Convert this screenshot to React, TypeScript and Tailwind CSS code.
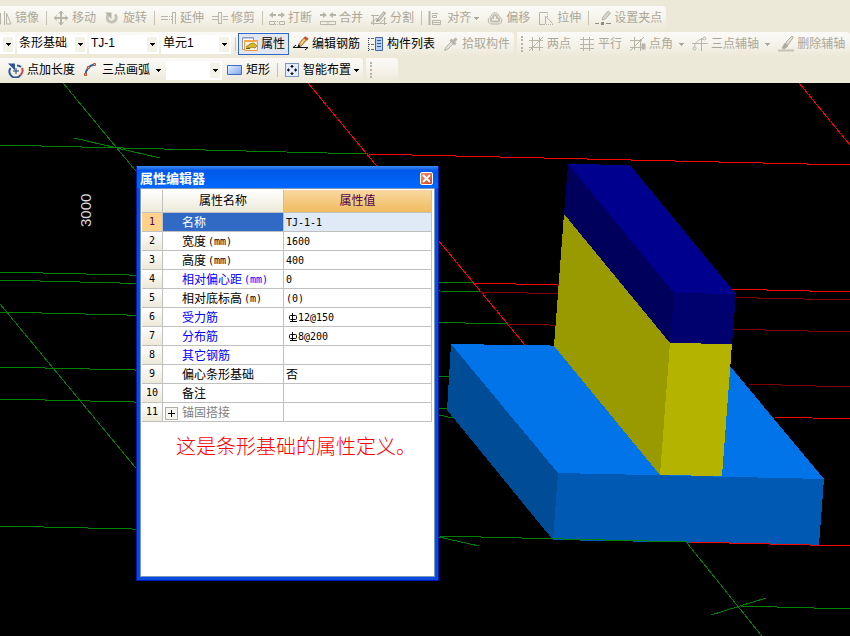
import type { ReactNode } from "react";

type Segment = [number, number, number, number, string];

const GREEN = "#008000";
const RED = "#ff0000";
const MAROON = "#800000";

const axes: Segment[] = [
  [63, 83, 140, 176, GREEN],
  [74, 138, 160, 158, GREEN],
  [0, 145, 368, 154, GREEN],
  [368, 154, 850, 165, RED],
  [308, 83, 525, 345, RED],
  [799, 83, 850, 145, RED],
  [0, 272, 474, 283, GREEN],
  [474, 283, 850, 292, RED],
  [0, 280, 480, 292, GREEN],
  [480, 292, 850, 300, MAROON],
  [0, 312, 507, 324, GREEN],
  [507, 324, 850, 332, MAROON],
  [0, 367, 451, 377, GREEN],
  [748, 384, 850, 387, MAROON],
  [0, 399, 447, 409, GREEN],
  [774, 417, 850, 419, RED],
  [0, 304, 140, 473, GREEN],
  [0, 526, 439, 536, GREEN],
  [430, 413, 453, 418, GREEN],
  [439, 537, 479, 546, GREEN],
  [687, 543, 765, 640, GREEN],
  [711, 615, 766, 598, GREEN],
  [740, 606, 850, 609, GREEN],
];

const faces = [
  { points: "451,344 715,348 824,479 558,473", fill: "#0074e8" },
  { points: "451,344 558,473 553,540 447,410", fill: "#004c96" },
  { points: "558,473 824,479 819,545 553,540", fill: "#005ab3" },
  { points: "564,214 670,343 660,475 554,346", fill: "#999900" },
  { points: "670,343 732,344 722,476 660,475", fill: "#b3b300" },
  { points: "568,164 630,165 736,294 674,293", fill: "#00008f" },
  { points: "568,164 674,293 670,343 564,214", fill: "#00005c" },
  { points: "674,293 736,294 732,344 670,343", fill: "#00006f" },
];

const rows = [
  { name: "名称", value: "TJ-1-1" },
  { name: "宽度", unit: "(mm)", value: "1600" },
  { name: "高度", unit: "(mm)", value: "400" },
  { name: "相对偏心距", unit: "(mm)", value: "0", tone: "text-[#0000ff]" },
  { name: "相对底标高", unit: "(m)", value: "(0)" },
  { name: "受力筋", value: "12@150", rebar: true, tone: "text-[#0000ff]" },
  { name: "分布筋", value: "8@200", rebar: true, tone: "text-[#0000ff]" },
  { name: "其它钢筋", value: "", tone: "text-[#0000ff]" },
  { name: "偏心条形基础", value: "否" },
  { name: "备注", value: "" },
  { name: "锚固搭接", value: "", tone: "text-[#808080]", expandable: true },
];

function Icon({ children }: { children: ReactNode }) {
  return (
    <svg viewBox="0 0 16 16" className="size-4 shrink-0" fill="none" stroke="#b7b4a8" aria-hidden="true">
      {children}
    </svg>
  );
}

const icons = {
  mirror: (
    <Icon>
      <path d="M4.500 3v11H0zM8.500 1v14M10.500 3v11H15z" />
    </Icon>
  ),
  move: (
    <Icon>
      <path d="M8 2v12M2 8h12" strokeWidth="2" />
      <path d="M5.500 4 8 1l2.500 3M5.500 12 8 15l2.500-3M4 5.500 1 8l3 2.500M12 5.500 15 8l-3 2.500" />
    </Icon>
  ),
  rotate: (
    <Icon>
      <path d="M11 4.500A4.500 4.500 0 1 1 4 5" stroke="#c4c1b5" strokeWidth="3" />
      <path d="M1 2.500h6.500V9z" fill="#b5b2a6" stroke="none" />
    </Icon>
  ),
  extend: (
    <Icon>
      <path d="M0 6.500h6M0 9.500h6" />
      <path d="M6 6.500h5M6 9.500h5" strokeDasharray="1 1" />
      <path d="M11.500 2v12M14.500 2v12M11 2.500h4" />
    </Icon>
  ),
  trim: (
    <Icon>
      <path d="M0 6.500h6M0 9.500h6M11 6.500h5M11 9.500h5" />
      <path d="M6.500 2v12M9.500 2v12M6 2.500h4M6 13.500h4" />
    </Icon>
  ),
  breakAt: (
    <Icon>
      <path d="M2 5h5M14 5H9" strokeWidth="2" />
      <path d="M0 5l4-3v6zM16 5l-4-3v6z" fill="#b7b4a8" stroke="none" />
      <path d="M.5 11.500h5v3h-5zM10.500 11.500h5v3h-5z" />
      <path d="M6 11.500h4M6 14.500h4" strokeDasharray="1 1" />
    </Icon>
  ),
  merge: (
    <Icon>
      <path d="M0 5h4M16 5h-4" strokeWidth="2" />
      <path d="M7 5 3 2v6zM9 5l4-3v6z" fill="#b7b4a8" stroke="none" />
      <path d="M.5 11.500h15v3H.5zM8 11v4" />
    </Icon>
  ),
  split: (
    <Icon>
      <path d="M0 5.500h8M0 13.500h16M2.500 5v10M13.500 7v8M0 13l6-5M9 13l6-5" />
      <path d="M7 10.500 14 2" strokeWidth="3.500" />
      <path d="M8 9l5-6" stroke="#e6e3d9" />
      <path d="m5 12 1-3 2 2z" fill="#8f8c80" stroke="none" />
    </Icon>
  ),
  align: (
    <Icon>
      <path d="M1.500 1v14" strokeWidth="2" />
      <path d="M4 3.500h6M4.500 7.500h4v-2h-4zM4.500 10.500h8v4h-8zM4 12.500h8" />
    </Icon>
  ),
  offset: (
    <Icon>
      <path d="M4 6.500C5 1.500 11 1.500 12 6.500 16 8.500 15.500 14 11 14H5C.5 14 0 8.500 4 6.500z" />
      <path d="M6 8c0-4 4-4 4 0 3 .5 3 3.500 0 3.500H6C3 11.500 3 8.500 6 8z" strokeWidth="2" stroke="#c0bdb1" />
    </Icon>
  ),
  stretch: (
    <Icon>
      <path d="M9 2.500H1.500v12H7" />
      <path d="M9.500 2v6M4 14.500h11M5 2.500h4" strokeDasharray="1 1" />
      <path d="M7.500 6l7 7.500M7.500 6v8" />
    </Icon>
  ),
  grip: (
    <Icon>
      <path d="M0 13.500h4M11 13.500h5" stroke="#8f8c80" />
      <path d="M6 12h3v3H6z" fill="#8f8c80" stroke="none" />
      <path d="M7 10l1-3 5-6 2.500 2-5 6z" fill="#d6d3c9" />
    </Icon>
  ),
  props: (
    <Icon>
      <path d="M.5 1.500h11v12H.5z" fill="#fff" stroke="#8c98b4" />
      <path d="M1 2.500h10" stroke="#c0cfe8" />
      <path d="M2.500 4.500h13v10h-13z" fill="#fff3dc" stroke="#f2973c" />
      <path d="M2 5h14" stroke="#f5a54c" strokeWidth="2" />
      <path d="m4 11 4-3 3-1 2 1 2 2-2 2-3-1-2 1-3-1z" fill="#dcb92c" stroke="#a08a2c" />
      <path d="M4 12.500h4" stroke="#6b5a1c" />
    </Icon>
  ),
  editBar: (
    <Icon>
      <path d="M0 11.500h15M0 11.500 3 9M15 11.500 12 14" stroke="#111" />
      <path d="M7 9 13 2" stroke="#a8703a" strokeWidth="4" />
      <path d="M7.500 8.500 12 3" stroke="#f5cf72" strokeWidth="2" />
      <path d="m12.500 3.500 1.500-2" stroke="#d64a36" strokeWidth="4" />
      <path d="m4 12 1.500-4L8 10.500z" fill="#222" stroke="none" />
    </Icon>
  ),
  list: (
    <Icon>
      <path d="M.5 2v13" stroke="#345" strokeDasharray="1 1" />
      <path d="M1 2.500h5M1 8.500h5M1 13.500h5" stroke="#5b6f94" strokeDasharray="1 1 3" />
      <path d="M7.500 1.500h7v13h-7z" fill="#b9d2fa" stroke="#3d66ae" />
      <path d="M9 4.500h4M9 7.500h4M9 10.500h4" stroke="#2a559f" />
    </Icon>
  ),
  pick: (
    <Icon>
      <path d="M1.500 14.500 3 11l6-6 2 2-6 6z" fill="#e3e0d6" />
      <path d="M7.500 3.500l5 5M10 6l3.500-3.500" strokeWidth="3" />
    </Icon>
  ),
  twoPoint: (
    <Icon>
      <path d="M4.500 1v14M11.500 1v14M1 4.500h14M1 11.500h14M1 15 15 1" />
    </Icon>
  ),
  parallel: (
    <Icon>
      <path d="M4.500 1v14M10.500 1v14M1 3.500h14M1 8.500h14M1 12.500h14" />
    </Icon>
  ),
  pointAngle: (
    <Icon>
      <path d="M4.500 1v13M10.500 3v12M0 4.500h12M0 11.500h12M0 15 14 1" />
      <path d="M12.500 8.500h2v4h-2z" strokeWidth="2" />
    </Icon>
  ),
  arcAxis: (
    <Icon>
      <path d="M2.500 12C2 7 7 2.500 12 3M0 7.500h16M9.500 2v13" />
      <circle cx="2.500" cy="12.500" r="1.500" fill="#eee" />
      <circle cx="12.500" cy="2.500" r="1.500" fill="#eee" />
    </Icon>
  ),
  eraseAxis: (
    <Icon>
      <path d="M0 14.500h16" strokeWidth="2" stroke="#c4c1b5" />
      <path d="M4 12l3-5 3 3-4 3z" fill="#aca899" />
      <path d="m8 6 6-6 1.500 1L10 9z" fill="#dedbd0" />
    </Icon>
  ),
  pointLength: (
    <Icon>
      <path d="M2.500 6a6 6 0 0 0 10 7" stroke="#2b5797" strokeWidth="2" />
      <path d="M9 3.500A6 6 0 0 1 13 5" stroke="#2b5797" strokeWidth="2" />
      <path d="M0 1.500h7v7z" fill="#2b5797" stroke="none" />
      <path d="M8 6v6M5 9h6" stroke="#1e3b6c" />
      <path d="M14 6c1 2 .5 5-1.500 7" stroke="#c04a4a" strokeWidth="2" />
    </Icon>
  ),
  arc: (
    <Icon>
      <path d="M2.500 13C2.500 8 6 3 12 2.500" stroke="#2c5f9e" strokeWidth="2" />
      <path d="M1.500 11.500h2v2h-2zM4.500 4.500h2v2h-2zM10.500 1.500h2v2h-2z" fill="#f3b5a5" stroke="#cf4a32" />
    </Icon>
  ),
  rect: (
    <Icon>
      <defs>
        <linearGradient id="rectFill" x1="0" y1="0" x2="1" y2="1">
          <stop offset="0" stopColor="#e8f1ff" />
          <stop offset="1" stopColor="#7ba4ec" />
        </linearGradient>
      </defs>
      <path d="M.5 3.500h14v9H.5z" fill="url(#rectFill)" stroke="#3f6cc8" />
    </Icon>
  ),
  smart: (
    <Icon>
      <path d="M1 1h14v14H1z" fill="#e2edff" stroke="none" />
      <path d="M1.500 1.500h13v13h-13z" stroke="#1d3f7c" strokeDasharray="1 1" />
      <path d="M8 3v3M8 10v3M3 8h3M10 8h3" stroke="#111" />
      <path d="M6 5h4L8 3zM6 11h4l-2 2zM5 6v4L3 8zM11 6v4l2-2z" fill="#111" stroke="none" />
    </Icon>
  ),
};

function Arrow({ muted = false }: { muted?: boolean }) {
  return (
    <svg viewBox="0 0 5 3" width="5" height="3" shapeRendering="crispEdges" aria-hidden="true">
      <path d="M0 0h5L2.500 3z" fill={muted ? "#aca899" : "#000"} />
    </svg>
  );
}

type ToolProps = {
  icon: ReactNode;
  label: string;
  disabled?: boolean;
  active?: boolean;
  menu?: "tight" | "wide";
};

function Tool({ icon, label, disabled, active, menu }: ToolProps) {
  return (
    <button
      type="button"
      disabled={disabled}
      className={`flex h-[22px] shrink-0 items-center border px-[3px] whitespace-nowrap ${
        active ? "border-[#316ac5] bg-[#e1e6f0]" : "border-transparent"
      } ${disabled ? "text-[#aca899]" : "text-black"}`}
    >
      {icon}
      <span className="ml-[3px]">{label}</span>
      {menu && (
        <span className={menu === "wide" ? "ml-1.5" : "ml-[3px]"}>
          <Arrow muted={disabled} />
        </span>
      )}
    </button>
  );
}

function Separator() {
  return <div className="mr-0.5 ml-[3px] h-[14px] w-px shrink-0 bg-[#c5c2b4]" />;
}

function Grip() {
  return <div className="mr-px ml-1 h-4 w-0 shrink-0 border-l-2 border-dotted border-[#b8b5a6]" />;
}

function Strip({ children, className = "" }: { children?: ReactNode; className?: string }) {
  return (
    <div
      className={`flex h-6 items-center rounded-r bg-linear-to-b from-[#fbfaf7] via-[#f5f3eb] to-[#ece9d8] ${className}`}
    >
      {children}
    </div>
  );
}

function Combo({ label, value, className }: { label: string; value: string; className: string }) {
  return (
    <div className={`relative h-[19px] shrink-0 bg-white ${className}`}>
      <select
        aria-label={label}
        defaultValue={value}
        className="block h-[17px] w-full appearance-none bg-transparent pl-0.5 leading-[17px] outline-none"
      >
        <option>{value}</option>
      </select>
      <span className="pointer-events-none absolute top-0.5 right-0.5 bottom-0.5 flex w-2.5 items-center justify-center bg-[#f3f1e8]">
        <Arrow />
      </span>
    </div>
  );
}

function Toolbars() {
  return (
    <header className="flex flex-col gap-0.5 overflow-hidden bg-[#ece9d8] pt-1.5 pb-px">
      <div className="flex">
        <Strip className="-ml-2">
          <Tool icon={icons.mirror} label="镜像" disabled />
          <Separator />
          <Tool icon={icons.move} label="移动" disabled />
          <Tool icon={icons.rotate} label="旋转" disabled />
          <Separator />
          <Tool icon={icons.extend} label="延伸" disabled />
          <Tool icon={icons.trim} label="修剪" disabled />
          <Separator />
          <Tool icon={icons.breakAt} label="打断" disabled />
          <Tool icon={icons.merge} label="合并" disabled />
          <Tool icon={icons.split} label="分割" disabled />
          <Separator />
          <Tool icon={icons.align} label="对齐" disabled menu="tight" />
          <Tool icon={icons.offset} label="偏移" disabled />
          <Tool icon={icons.stretch} label="拉伸" disabled />
          <Separator />
          <Tool icon={icons.grip} label="设置夹点" disabled />
        </Strip>
      </div>
      <div className="flex gap-[3px]">
        <Strip>
          <div className="mr-px flex gap-0.5">
            <Combo label="楼层" value="" className="w-[15px]" />
            <Combo label="构件类型" value="条形基础" className="w-[70px]" />
            <Combo label="构件" value="TJ-1" className="w-[70px]" />
            <Combo label="单元" value="单元1" className="w-[70px]" />
          </div>
          <Separator />
          <Tool icon={icons.props} label="属性" active />
          <Tool icon={icons.editBar} label="编辑钢筋" />
          <Tool icon={icons.list} label="构件列表" />
          <Tool icon={icons.pick} label="拾取构件" disabled />
        </Strip>
        <Strip className="grow">
          <Grip />
          <Tool icon={icons.twoPoint} label="两点" disabled />
          <Tool icon={icons.parallel} label="平行" disabled />
          <Tool icon={icons.pointAngle} label="点角" disabled menu="wide" />
          <Tool icon={icons.arcAxis} label="三点辅轴" disabled menu="wide" />
          <Tool icon={icons.eraseAxis} label="删除辅轴" disabled />
        </Strip>
      </div>
      <div className="flex gap-[3px]">
        <Strip className="pl-1">
          <Tool icon={icons.pointLength} label="点加长度" />
          <Tool icon={icons.arc} label="三点画弧" menu="wide" />
          <Combo label="半径" value="" className="mr-px ml-px w-14" />
          <Tool icon={icons.rect} label="矩形" />
          <Separator />
          <Tool icon={icons.smart} label="智能布置" menu="tight" />
        </Strip>
        <Strip className="w-8">
          <Grip />
        </Strip>
      </div>
    </header>
  );
}

function Scene() {
  return (
    <svg
      viewBox="0 83 850 553"
      preserveAspectRatio="xMinYMin slice"
      className="absolute inset-0 h-full w-full"
      shapeRendering="crispEdges"
      role="img"
      aria-label="条形基础三维视图"
    >
      {axes.map(([x1, y1, x2, y2, color]) => (
        <line key={`${x1}-${y1}-${x2}`} x1={x1} y1={y1} x2={x2} y2={y2} stroke={color} />
      ))}
      {faces.map((face) => (
        <polygon key={face.points} points={face.points} fill={face.fill} />
      ))}
      {/* ground axis passes in front of the footing */}
      <line x1="439" y1="536" x2="688" y2="542" stroke={GREEN} />
      <line x1="688" y1="542" x2="850" y2="546" stroke={RED} />
      <text x="91" y="227" transform="rotate(-90 91 227)" fill="#dcdcdc" className="font-['Liberation_Sans',sans-serif] text-[15px]">
        3000
      </text>
    </svg>
  );
}

function Rebar() {
  return (
    <svg viewBox="0 0 10 10" className="size-2.5" fill="none" stroke="#000" aria-hidden="true">
      <path d="M2.500 2.500h5q1 0 1 1v2q0 1-1 1h-5q-1 0-1-1v-2q0-1 1-1zM4.500 0v9M2 8.500h7" />
    </svg>
  );
}

function PropertyTable() {
  return (
    <table className="w-[290px] table-fixed border-separate border-spacing-0">
      <colgroup>
        <col className="w-[21px]" />
        <col className="w-[121px]" />
        <col />
      </colgroup>
      <thead>
        <tr className="h-[23px] *:border-r *:border-b *:border-[#c0c0c0] *:p-0 *:font-normal">
          <td className="bg-linear-to-b from-white to-[#ece9d8]" />
          <th scope="col" className="bg-linear-to-b from-white to-[#ece9d8]">
            属性名称
          </th>
          <th scope="col" className="bg-linear-to-b from-[#f8d8a0] to-[#f0bc5c] text-[#500050]">
            属性值
          </th>
        </tr>
      </thead>
      <tbody>
        {rows.map((row, i) => {
          const selected = i === 0;
          return (
            <tr key={row.name} className="h-[19px] *:border-r *:border-b *:border-[#c0c0c0] *:p-0">
              <th
                scope="row"
                className={`font-['DejaVu_Sans_Mono',monospace] text-[10px] font-normal ${
                  selected ? "bg-[#ffd28c] text-[#500050]" : "bg-linear-to-b from-white to-[#ece9d8]"
                }`}
              >
                {i + 1}
              </th>
              <td className={selected ? "bg-[#316ac5] text-white" : row.tone}>
                <div className="flex h-[18px] items-center pt-0.5">
                  <span className="flex w-[19px] shrink-0 pl-0.5">
                    {row.expandable && (
                      <button
                        type="button"
                        aria-label="展开"
                        className="flex size-[13px] items-center justify-center border border-[#b0b0a8] bg-[#f5f4ee]"
                      >
                        <svg viewBox="0 0 7 7" width="7" height="7" stroke="#000" shapeRendering="crispEdges">
                          <path d="M0 3.500h7M3.500 0v7" />
                        </svg>
                      </button>
                    )}
                  </span>
                  {row.name}
                  {row.unit && (
                    <span className="ml-0.5 font-['DejaVu_Sans_Mono',monospace] text-[10px]">{row.unit}</span>
                  )}
                </div>
              </td>
              <td className={selected ? "bg-[#e0e9f6]" : ""}>
                <div
                  className={`flex h-[18px] items-center pt-0.5 font-['DejaVu_Sans_Mono','Noto_Sans_CJK_SC',monospace] ${
                    row.value === "否" ? "pl-0.5 text-[12px]" : row.rebar ? "pl-1 text-[10px]" : "pl-0.5 text-[10px]"
                  }`}
                >
                  {row.rebar && <Rebar />}
                  {row.value}
                </div>
              </td>
            </tr>
          );
        })}
      </tbody>
    </table>
  );
}

function PropertyWindow() {
  return (
    <section
      aria-labelledby="property-title"
      className="absolute top-[83px] left-[136px] flex h-[415px] w-[303px] flex-col border-x border-b border-[#0019b0] bg-[#0a4ae0]"
    >
      <div className="flex h-[22px] shrink-0 items-center justify-between bg-linear-to-b from-[#3c8cf5] via-[#0058e6] via-20% to-[#0068ff] pt-[3px] pr-[5px] pl-[3px]">
        <h2 id="property-title" className="text-[13px] font-bold text-white">
          属性编辑器
        </h2>
        <button
          type="button"
          aria-label="关闭"
          className="flex size-[13px] items-center justify-center rounded-xs border border-white bg-linear-to-br from-[#f0906c] to-[#d43a10]"
        >
          <svg viewBox="0 0 9 9" width="9" height="9" stroke="#fff" strokeWidth="2" aria-hidden="true">
            <path d="m1 1 7 7M8 1 1 8" />
          </svg>
        </button>
      </div>
      <div className="mx-[3px] mb-[3px] grow border border-[#7b9ab8] bg-white pt-px pl-px">
        <PropertyTable />
        <p className="mt-2.5 ml-[34px] text-[20px] leading-[30px] font-light whitespace-nowrap text-[#ff0000]">
          这是条形基础的属性定义。
        </p>
      </div>
    </section>
  );
}

export default function App() {
  return (
    <div className="flex min-h-screen flex-col overflow-hidden bg-black font-['Liberation_Sans','Noto_Sans_CJK_SC',sans-serif] text-[12px] leading-[16px]">
      <Toolbars />
      <main className="relative min-h-[520px] grow overflow-hidden">
        <Scene />
        <PropertyWindow />
      </main>
    </div>
  );
}
